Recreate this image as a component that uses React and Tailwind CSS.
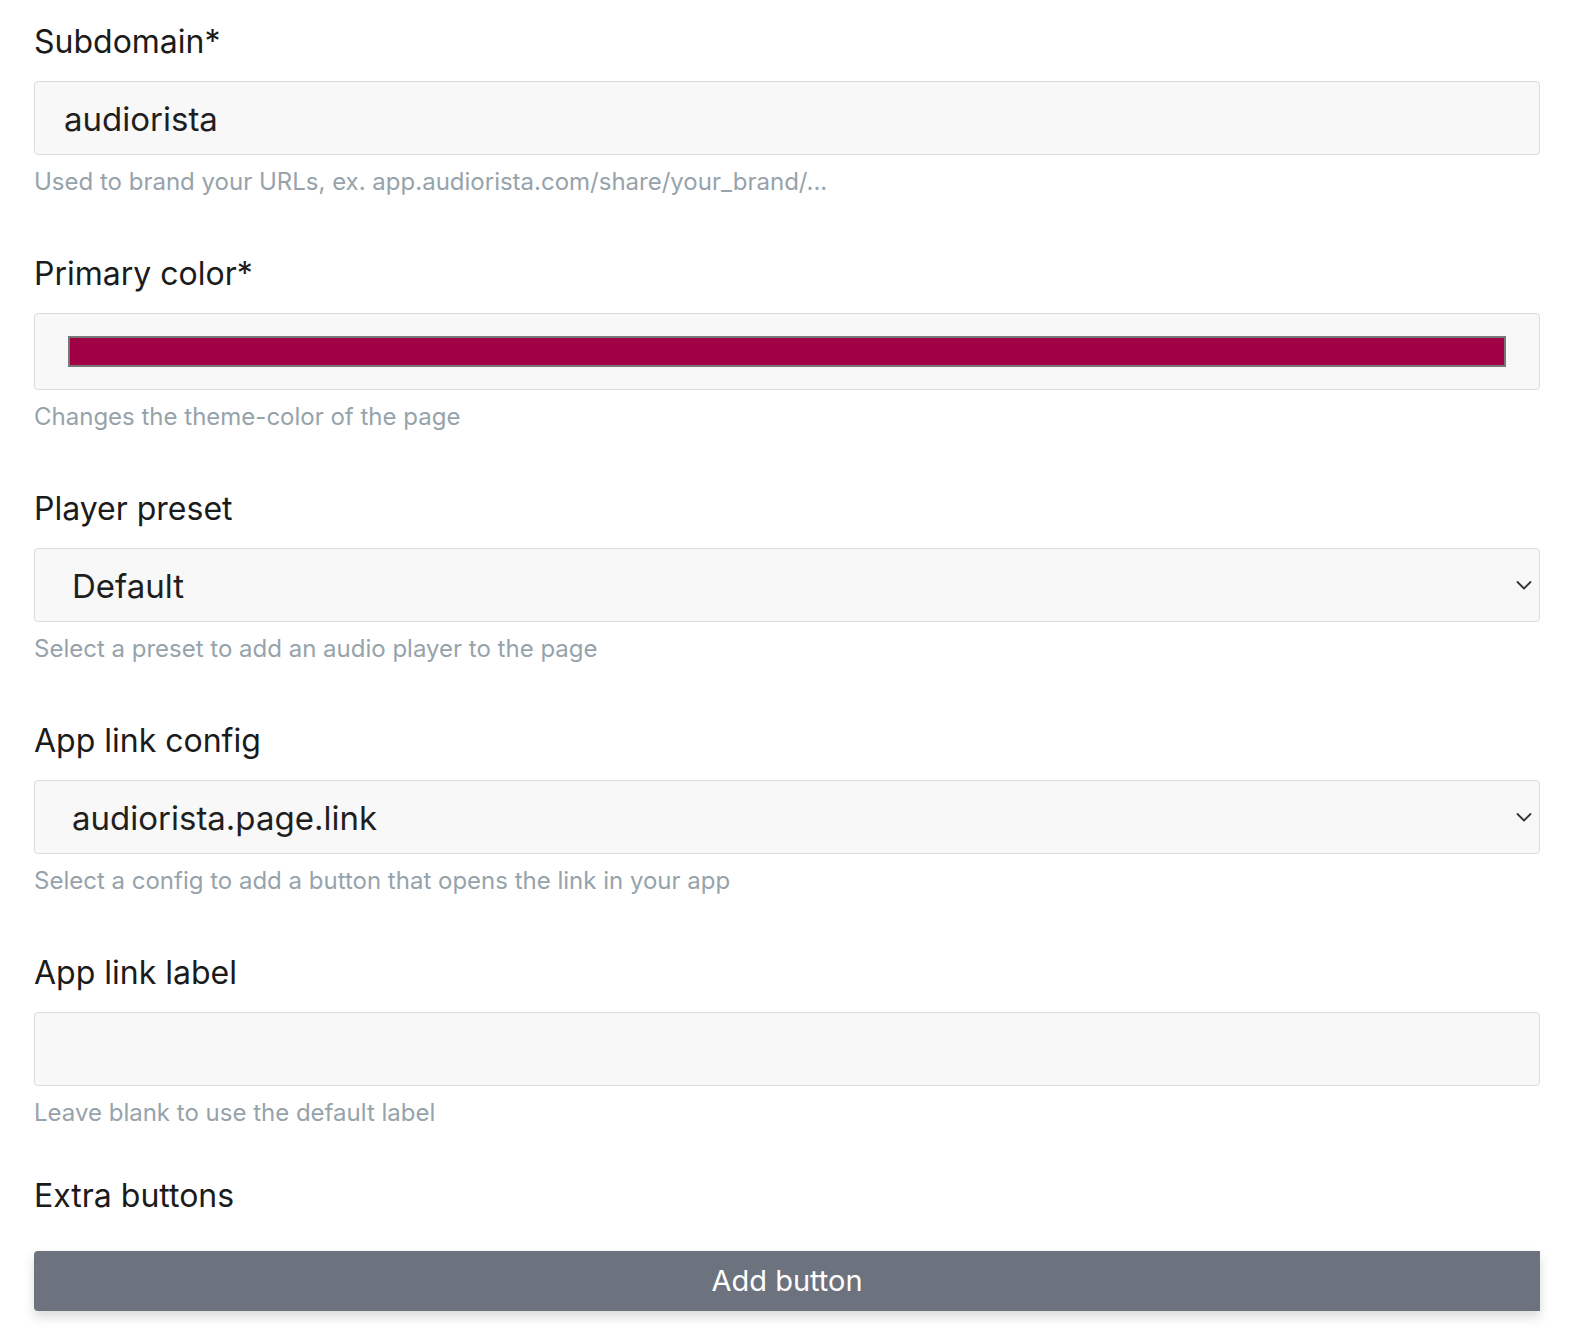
import React from 'react';

const font = { fontFamily: 'Inter, "Noto Sans", sans-serif' };

const Chevron = () => (
  <svg width="18" height="18" viewBox="0 0 18 18" fill="none" className="text-[#333]">
    <path d="M2.5 6 L9 12.5 L15.5 6" stroke="currentColor" strokeWidth="1.8" strokeLinecap="round" strokeLinejoin="round" />
  </svg>
);

const Field = ({ label, help, children, last }) => (
  <div className={`flex flex-col ${last ? 'mb-[48px]' : 'mb-[57px]'}`}>
    <label className="text-[32px] leading-[38px] text-[#1b1b1b] mb-[20px]">{label}</label>
    {children}
    <p className="text-[24px] leading-[33px] text-[#96a3ab] mt-[10px]">{help}</p>
  </div>
);

export default function App() {
  return (
    <div className="min-h-screen bg-white px-[34px] pt-[23px]" style={font}>
      <Field label="Subdomain*" help="Used to brand your URLs, ex. app.audiorista.com/share/your_brand/...">
        <div className="h-[74px] rounded-[4px] border border-[#dcdcdc] bg-[#f8f8f8] flex items-center px-[29px] pt-[3px]">
          <span className="text-[33px] text-[#1f1f1f]">audiorista</span>
        </div>
      </Field>

      <Field label="Primary color*" help="Changes the theme-color of the page">
        <div className="h-[77px] rounded-[4px] border border-[#dcdcdc] bg-[#f8f8f8] flex items-center pl-[33px] pr-[33px]">
          <div className="w-full h-[31px] bg-[#a10044] border-2 border-[#777]" />
        </div>
      </Field>

      <Field label="Player preset" help="Select a preset to add an audio player to the page">
        <div className="h-[74px] rounded-[4px] border border-[#dcdcdc] bg-[#f8f8f8] flex items-center justify-between pl-[37px] pr-[6px]">
          <span className="text-[33px] text-[#1f1f1f] pt-[3px]">Default</span>
          <Chevron />
        </div>
      </Field>

      <Field label="App link config" help="Select a config to add a button that opens the link in your app">
        <div className="h-[74px] rounded-[4px] border border-[#dcdcdc] bg-[#f8f8f8] flex items-center justify-between pl-[37px] pr-[6px]">
          <span className="text-[33px] text-[#1f1f1f] pt-[3px]">audiorista.page.link</span>
          <Chevron />
        </div>
      </Field>

      <Field label="App link label" help="Leave blank to use the default label" last>
        <div className="h-[74px] rounded-[4px] border border-[#dcdcdc] bg-[#f8f8f8]" />
      </Field>

      <div className="flex flex-col">
        <label className="text-[32px] leading-[38px] text-[#1b1b1b] mb-[36px]">Extra buttons</label>
        <button className="h-[60px] rounded-l-[4px] bg-[#6c737e] text-white text-[29px] shadow-[0_6px_12px_rgba(0,0,0,0.15)]">
          Add button
        </button>
      </div>
    </div>
  );
}
